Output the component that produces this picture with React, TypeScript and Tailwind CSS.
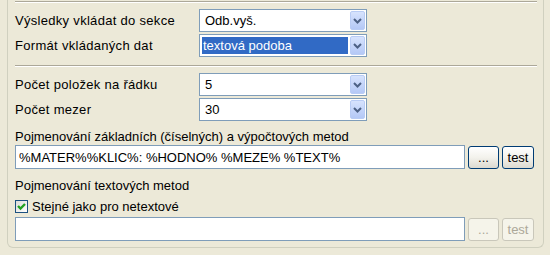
import React from "react";

const font = "font-['Liberation_Sans',Arial,sans-serif]";

const Arrow = () => (
	<svg width="9" height="6" viewBox="0 0 9 6">
		<path d="M1 1 L4.5 4.5 L8 1" fill="none" stroke="#4D6185" strokeWidth="2" />
	</svg>
);

interface ComboProps {
	value: string;
	selected?: boolean;
}

const Combo = ({ value, selected }: ComboProps) => (
	<div className="flex h-[23px] w-[168px] border border-[#7F9DB9] bg-white">
		<div className="flex grow items-center p-[2px]">
			{selected ? (
				<span className="flex h-full w-full items-center bg-[#316AC5] pl-[1px] text-white">{value}</span>
			) : (
				<span className="pl-[3px]">{value}</span>
			)}
		</div>
		<div className="m-[1px] ml-0 flex w-[15px] items-center justify-center rounded-[2px] border border-[#B9CCF5] bg-gradient-to-b from-[#D7E3FD] to-[#B4C8F6]">
			<Arrow />
		</div>
	</div>
);

const Row = ({ label, children }: { label: string; children: React.ReactNode }) => (
	<div className="flex h-[23px] items-center">
		<div className="w-[184px] tracking-[0.3px]">{label}</div>
		{children}
	</div>
);

const Separator = ({ className }: { className?: string }) => (
	<div className={"w-[522px] border-t border-b border-t-[#ACA899] border-b-white " + (className ?? "")} />
);

const XPButton = ({ label, disabled, w }: { label: string; disabled?: boolean; w: string }) => (
	<div
		className={
			"flex h-[23px] items-center justify-center rounded-[3px] border " +
			w +
			" " +
			(disabled
				? "border-[#C9C7BA] bg-[#F5F4EA] text-[#ACA899]"
				: "border-[#003C74] bg-gradient-to-b from-[#FFFFFF] via-[#F3F2EC] to-[#DCDAD0] text-black")
		}
	>
		{label}
	</div>
);

const Field = ({ value, children }: { value?: string; children?: React.ReactNode }) => (
	<div className="flex h-[24px] items-center gap-[3px]">
		<div className="flex h-[24px] w-[450px] items-center border border-[#7F9DB9] bg-white pl-[3px] whitespace-nowrap">
			{value}
		</div>
		{children}
	</div>
);

export default function App() {
	return (
		<div className={"h-[255px] w-[550px] overflow-hidden bg-[#ECE9D8] text-[13px] leading-[15px] text-black " + font}>
			<div className="ml-[7px] h-[248px] w-[537px] rounded-b-[6px] border-x border-b border-[#D0D0BF] pl-[7px] pt-[1px]">
				<Separator />
				<div className="mt-[6px]">
					<Row label="Výsledky vkládat do sekce">
						<Combo value="Odb.vyš." />
					</Row>
				</div>
				<div className="mt-[2px]">
					<Row label="Formát vkládaných dat">
						<Combo value="textová podoba" selected />
					</Row>
				</div>
				<Separator className="mt-[8px]" />
				<div className="mt-[6px]">
					<Row label="Počet položek na řádku">
						<Combo value="5" />
					</Row>
				</div>
				<div className="mt-[2px]">
					<Row label="Počet mezer">
						<Combo value="30" />
					</Row>
				</div>
				<div className="mt-[8px]">Pojmenování základních (číselných) a výpočtových metod</div>
				<div className="mt-[1px]">
					<Field value="%MATER%%KLIC%: %HODNO% %MEZE% %TEXT%">
						<XPButton label="..." w="w-[31px]" />
						<XPButton label="test" w="w-[32px]" />
					</Field>
				</div>
				<div className="mt-[9px]">Pojmenování textových metod</div>
				<div className="mt-[7px] flex h-[13px] items-center gap-[4px]">
					<div className="flex h-[13px] w-[13px] items-center justify-center border border-[#1C5180] bg-gradient-to-br from-[#DCDCD7] to-white">
						<svg width="11" height="11" viewBox="0 0 11 11">
							<path d="M2 5 L4.5 7.5 L9 3" fill="none" stroke="#21A121" strokeWidth="2.4" />
						</svg>
					</div>
					<span>Stejné jako pro netextové</span>
				</div>
				<div className="mt-[4px]">
					<Field>
						<XPButton label="..." w="w-[31px]" disabled />
						<XPButton label="test" w="w-[32px]" disabled />
					</Field>
				</div>
			</div>
		</div>
	);
}
